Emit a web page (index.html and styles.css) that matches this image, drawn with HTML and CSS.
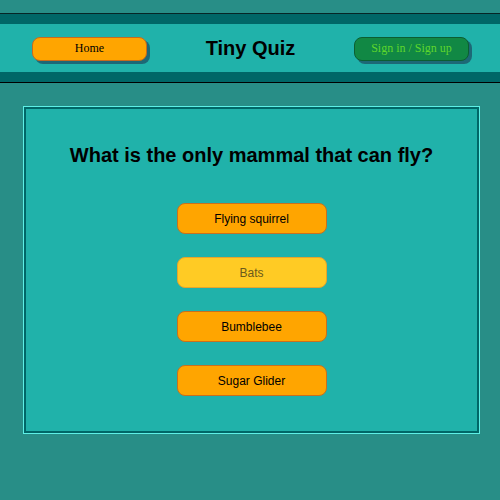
FILE: index.html
```html
<!DOCTYPE html>
<html>
<head>
<meta charset="utf-8">
<title>Tiny Quiz</title>
<link rel="stylesheet" href="styles.css">
</head>
<body>
<header class="header">
  <div class="bar">
    <button class="nav-btn home">Home</button>
    <h1 class="title">Tiny Quiz</h1>
    <button class="nav-btn sign">Sign in / Sign up</button>
  </div>
</header>
<main class="panel">
  <h2 class="question">What is the only mammal that can fly?</h2>
  <div class="answers">
    <button class="answer">Flying squirrel</button>
    <button class="answer active">Bats</button>
    <button class="answer">Bumblebee</button>
    <button class="answer">Sugar Glider</button>
  </div>
</main>
</body>
</html>
```
FILE: styles.css
```css
html, body {
  margin: 0;
  padding: 0;
  background: #288e87;
  height: 100%;
}
body {
  font-family: "Liberation Sans", Arial, sans-serif;
}
.header {
  margin-top: 13px;
  border-top: 1px solid #062626;
  border-bottom: 1px solid #000;
}
.bar {
  height: 48px;
  background: #20b2aa;
  border-top: 10px solid #006767;
  border-bottom: 10px solid #006767;
  display: flex;
  align-items: center;
  justify-content: space-between;
  padding: 0 31px 0 32px;
}
.nav-btn {
  width: 115px;
  height: 24px;
  border-radius: 8px;
  font-family: "Liberation Serif", "Times New Roman", serif;
  font-size: 12px;
  box-shadow: 3px 3px 0 #1d6876;
  padding: 0;
  margin-top: 1px;
}
.home {
  background: #ffa500;
  border: 1px solid #c86a1c;
  color: #000;
}
.sign {
  background: #118844;
  border: 1px solid #0b5e32;
  color: #5ed62c;
}
.title {
  margin: 0;
  font-size: 20px;
  font-weight: bold;
  color: #000;
}
.panel {
  display: block;
  margin: 24px 0 0 24px;
  width: 451px;
  background: #20b2aa;
  border: 2px solid #006767;
  outline: 1px solid #5ef0e6;
  padding: 35px 0;
}
.question {
  margin: 0;
  text-align: center;
  font-size: 20px;
  font-weight: bold;
  line-height: 23px;
  color: #000;
}
.answers {
  margin-top: 36px;
  display: flex;
  flex-direction: column;
  align-items: center;
  gap: 23px;
}
.answer {
  width: 150px;
  height: 31px;
  background: #ffa500;
  border: 1px solid #c8701e;
  border-radius: 8px;
  font-family: "Liberation Sans", Arial, sans-serif;
  font-size: 12px;
  color: #000;
  padding: 0;
}
.answer.active {
  background: #ffcb24;
  border-color: #e6a52c;
  color: #6b5a1c;
}
```
